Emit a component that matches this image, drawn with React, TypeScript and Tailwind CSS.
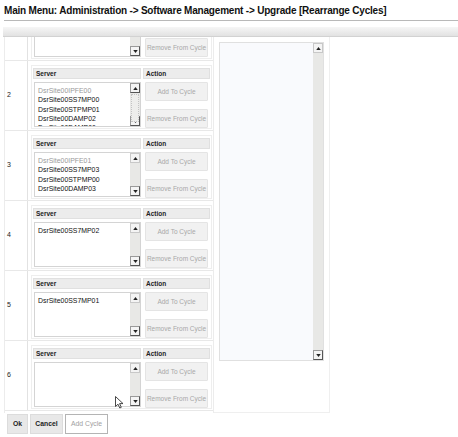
import React from "react";

type Cycle = { id: number; servers: { name: string; disabled?: boolean }[]; thumb?: boolean; clipped?: boolean };

const cycles: Cycle[] = [
  { id: 1, servers: [], clipped: true },
  {
    id: 2,
    thumb: true,
    servers: [
      { name: "DsrSite00IPFE00", disabled: true },
      { name: "DsrSite00SS7MP00" },
      { name: "DsrSite00STPMP01" },
      { name: "DsrSite00DAMP02" },
      { name: "DsrSite00DAMP00" },
    ],
  },
  {
    id: 3,
    servers: [
      { name: "DsrSite00IPFE01", disabled: true },
      { name: "DsrSite00SS7MP03" },
      { name: "DsrSite00STPMP00" },
      { name: "DsrSite00DAMP03" },
    ],
  },
  { id: 4, servers: [{ name: "DsrSite00SS7MP02" }] },
  { id: 5, servers: [{ name: "DsrSite00SS7MP01" }] },
  { id: 6, servers: [] },
];

function Arrow({ up, dark }: { up?: boolean; dark?: boolean }) {
  return (
    <div
      className={`h-[10px] w-full flex items-center justify-center border bg-[#f4f4f4] ${
        dark ? "border-[#9a9a9a] border-r-[#555] border-b-[#555]" : "border-[#c8c8c8]"
      }`}
    >
      <svg width="5" height="3" viewBox="0 0 6 4">
        {up ? <path d="M0 4 L3 0 L6 4 Z" fill="#222" /> : <path d="M0 0 L6 0 L3 4 Z" fill="#222" />}
      </svg>
    </div>
  );
}

function ScrollBar({ thumb }: { thumb?: boolean }) {
  return (
    <div className="w-[10px] h-full flex flex-col bg-[#e8e8e6]">
      <Arrow up dark={thumb} />
      <div className="flex-1 relative">
        {thumb && (
          <div className="absolute left-[1px] right-[1px] top-[1px] h-[28px] border border-dotted border-[#c4c4c4] bg-[#eeeeec]" />
        )}
      </div>
      <Arrow dark />
    </div>
  );
}

function CycleRow({ cycle }: { cycle: Cycle }) {
  // the first cycle is scrolled mostly out of view, so its labels are never seen
  const show = !cycle.clipped;
  return (
    <div className="h-[70px] flex border-b border-[#e8e8e8]">
      <div className="w-[23px] border-r border-[#e2e2e2] flex items-center pl-[2px] text-[7px] text-[#222]">
        {show && cycle.id}
      </div>
      <div className="flex-1 pt-[4px] pl-[3px] pr-[1px]">
        <div className="h-[64px] border border-[#eeeeee] p-[1px] flex gap-[2px]">
          <div className="w-[108px] flex flex-col">
            <div className="h-[11px] mt-[1px] bg-[#ececec] border border-[#e0e0e0] text-[6.5px] font-bold leading-[9px] pl-[2px] text-[#222]">
              {show && "Server"}
            </div>
            <div className="mt-[3px] ml-[1px] h-[46px] flex border border-[#d4d4d4] bg-white overflow-hidden">
              <div className="flex-1 pl-[3px] pt-[3px] overflow-hidden">
                {cycle.servers.map((s) => (
                  <div
                    key={s.name}
                    className={`text-[6.9px] leading-[9.3px] whitespace-nowrap ${
                      s.disabled ? "text-[#9a9a9a]" : "text-[#111]"
                    }`}
                  >
                    {s.name}
                  </div>
                ))}
              </div>
              <ScrollBar thumb={cycle.thumb} />
            </div>
          </div>
          <div className="flex-1 flex flex-col">
            <div className="h-[11px] mt-[1px] bg-[#ececec] border border-[#e0e0e0] text-[6.5px] font-bold leading-[9px] pl-[2px] text-[#222]">
              {show && "Action"}
            </div>
            <div className="mt-[3px] px-[2px] flex flex-col gap-[8px]">
              <button className="h-[19px] bg-[#f1f1f1] border border-[#e4e4e4] rounded-[1px] text-[6.5px] whitespace-nowrap text-[#a8a8a8]">
                {show && "Add To Cycle"}
              </button>
              <button className="h-[19px] bg-[#f1f1f1] border border-[#e4e4e4] rounded-[1px] text-[6.5px] whitespace-nowrap text-[#a8a8a8]">
                Remove From Cycle
              </button>
            </div>
          </div>
        </div>
      </div>
    </div>
  );
}

export default function App() {
  return (
    <div className="w-[458px] h-[437px] bg-white overflow-hidden relative font-['Liberation_Sans',Arial,sans-serif]">
      {/* Title */}
      <div className="pt-[5px] h-[21px] border-b border-[#b9b9b9] ml-[4px]">
        <h1 className="text-[10px] tracking-[-0.2px] font-bold text-[#111] leading-[12px] whitespace-nowrap">
          Main Menu: Administration -&gt; Software Management -&gt; Upgrade [Rearrange Cycles]
        </h1>
      </div>
      <div className="mt-[6px] ml-[3px] h-[10px] bg-gradient-to-b from-[#f6f6f6] to-[#e2e2e2] border-b border-[#d2d2d2]" />

      {/* Cycles */}
      <div className="flex ml-[4px] h-[376px]">
        <div className="w-[210px] overflow-hidden border-l border-[#ececec] border-r border-r-[#ececec]">
          <div className="-mt-[46px]">
            {cycles.map((c) => (
              <CycleRow key={c.id} cycle={c} />
            ))}
          </div>
        </div>
        <div className="w-[116px] border-r border-b border-[#efefef] pl-[5px] pr-[5px] pt-[5px]">
          <div className="h-[319px] flex border border-[#e0e0e0] bg-[#f9fafd]">
            <div className="flex-1" />
            <ScrollBar />
          </div>
        </div>
      </div>

      {/* Buttons */}
      <div className="flex gap-[2px] pl-[7px] pt-[1px]">
        <button className="w-[21px] h-[20px] bg-[#e8e8e8] border border-[#dcdcdc] text-[6.8px] font-bold text-[#222]">
          Ok
        </button>
        <button className="w-[33px] h-[20px] bg-[#e8e8e8] border border-[#dcdcdc] text-[6.8px] font-bold text-[#222]">
          Cancel
        </button>
        <button className="w-[43px] h-[20px] bg-white border border-[#b4b4b4] text-[6.8px] text-[#a0a0a0]">
          Add Cycle
        </button>
      </div>

      {/* Mouse cursor */}
      <svg className="absolute left-[115px] top-[396px]" width="9" height="13" viewBox="0 0 9 13">
        <path d="M0.5 0.5 L0.5 10.5 L3 8.2 L4.8 12 L6.3 11.3 L4.6 7.6 L8 7.6 Z" fill="#fff" stroke="#333" strokeWidth="0.9" />
      </svg>
    </div>
  );
}
